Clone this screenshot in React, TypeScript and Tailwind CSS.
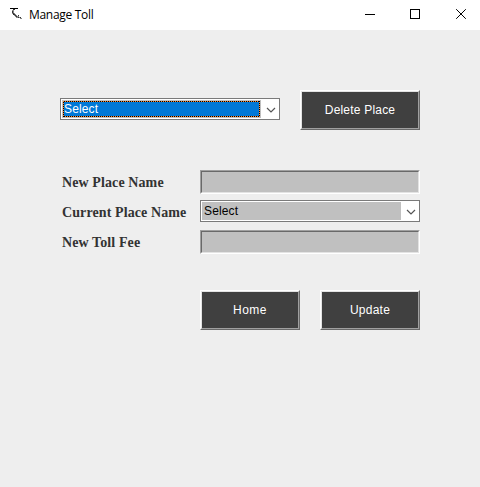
import type { ReactNode } from 'react';

function TitleBar() {
  return (
    <header className="flex h-[30px] items-center bg-white pl-2 text-black">
      <svg width="16" height="16" viewBox="0 0 16 16" shapeRendering="crispEdges">
        <path d="M2 1h8v1H2z" fill="#000" />
        <path d="M5 2h2v1H5zM4 4h1v2H4zM5 6h1v1H5zM5 7h2v1H5zM7 8h1v1H7zM8 9h1v1H8zM10 10h1v1h-1zM12 10h1v1h-1zM10 8h1v1h-1z" fill="#333" />
        <path d="M4 3h2v1H4zM5 4h1v2H5zM4 6h1v1H4zM6 6h1v1H6zM7 7h1v1H7zM6 8h1v1H6zM8 8h1v1H8zM7 9h1v1H7zM9 9h2v1H9zM8 10h2v1H8zM11 10h1v1h-1zM12 11h2v1h-2z" fill="#888" />
      </svg>
      <span className="ml-[5px] font-['Open_Sans',sans-serif] text-[12px] leading-4 tracking-[-0.3px]">Manage Toll</span>
      <svg className="ml-auto" width="130" height="30" viewBox="350 0 130 30" fill="none" stroke="#000">
        <path d="M365 14.5h10M410.5 9.5h9v9h-9z" shapeRendering="crispEdges" />
        <path d="M456.2 9.2l9.6 9.6M465.8 9.2l-9.6 9.6" strokeWidth="1" />
      </svg>
    </header>
  );
}

function Chevron() {
  return (
    <svg className="ml-[5px] mt-[7px]" width="10" height="7" viewBox="0 0 10 7" fill="none" stroke="#555" strokeWidth="1.2">
      <path d="M1 1l4 4 4-4" />
    </svg>
  );
}

function ComboBox({ active }: { active?: boolean }) {
  return (
    <div className="flex h-[22px] w-[220px] border border-[#7a7a7a] bg-white p-px font-['Liberation_Sans',Arial,sans-serif] text-[12px]">
      <div className="h-[18px] w-[199px] bg-[#c0c0c0] p-px">
        {active ? (
          <div className="h-4 bg-[repeating-linear-gradient(90deg,#ff8728_0_1px,#000_1px_2px)] p-px">
            <div className="relative h-[14px] bg-[#0078d7] leading-[14px] tracking-[0.15px] text-white">
              <span>Select</span>
              <span className="absolute -left-px -top-px h-4 w-px bg-[repeating-linear-gradient(180deg,#ff8728_0_1px,#000_1px_2px)]" />
              <span className="absolute -right-px -top-px h-4 w-px bg-[repeating-linear-gradient(180deg,#000_0_1px,#ff8728_1px_2px)]" />
            </div>
          </div>
        ) : (
          <div className="pl-px leading-4 tracking-[0.15px] text-black">Select</div>
        )}
      </div>
      <Chevron />
    </div>
  );
}

function RaisedButton({ children }: { children: ReactNode }) {
  return (
    <button className="h-10 w-full border border-b-[#696969] border-l-white border-r-[#696969] border-t-white">
      <span className="flex h-full items-center justify-center border border-b-[#a0a0a0] border-l-[#e3e3e3] border-r-[#a0a0a0] border-t-[#e3e3e3] bg-[#404040] font-['Liberation_Sans',Arial,sans-serif] text-[12px] text-white">
        {children}
      </span>
    </button>
  );
}

function SunkenField() {
  return (
    <div className="h-6 w-[220px] border border-b-white border-l-[#a0a0a0] border-r-white border-t-[#a0a0a0]">
      <div className="h-full border border-b-[#e3e3e3] border-l-[#696969] border-r-[#e3e3e3] border-t-[#696969] bg-[#c0c0c0]" />
    </div>
  );
}

function Row({ label, children }: { label: string; children: ReactNode }) {
  return (
    <div className="flex h-[30px] items-start">
      <span className="w-[140px] whitespace-nowrap pl-0.5 pt-[5px] font-['Liberation_Serif','Times_New_Roman',serif] text-[14px] font-bold leading-4 tracking-[0.1px] text-[#333]">
        {label}
      </span>
      {children}
    </div>
  );
}

export default function App() {
  return (
    <div className="h-[487px] w-[480px] overflow-hidden bg-[#eeeeee]">
      <TitleBar />
      <main className="px-[60px] pt-[60px]">
        <div className="flex h-10 items-start gap-5">
          <div className="pt-2"><ComboBox active /></div>
          <div className="w-[120px]">
            <RaisedButton><span className="tracking-[0.2px]">Delete Place</span></RaisedButton>
          </div>
        </div>
        <div className="mt-10">
          <Row label="New Place Name"><SunkenField /></Row>
          <Row label="Current Place Name"><ComboBox /></Row>
          <Row label="New Toll Fee"><SunkenField /></Row>
        </div>
        <div className="mt-[30px] flex justify-end gap-5">
          <div className="w-[100px]">
            <RaisedButton><span className="tracking-[0.5px]">Home</span></RaisedButton>
          </div>
          <div className="w-[100px]">
            <RaisedButton><span className="tracking-[0.25px]">Update</span></RaisedButton>
          </div>
        </div>
      </main>
    </div>
  );
}
